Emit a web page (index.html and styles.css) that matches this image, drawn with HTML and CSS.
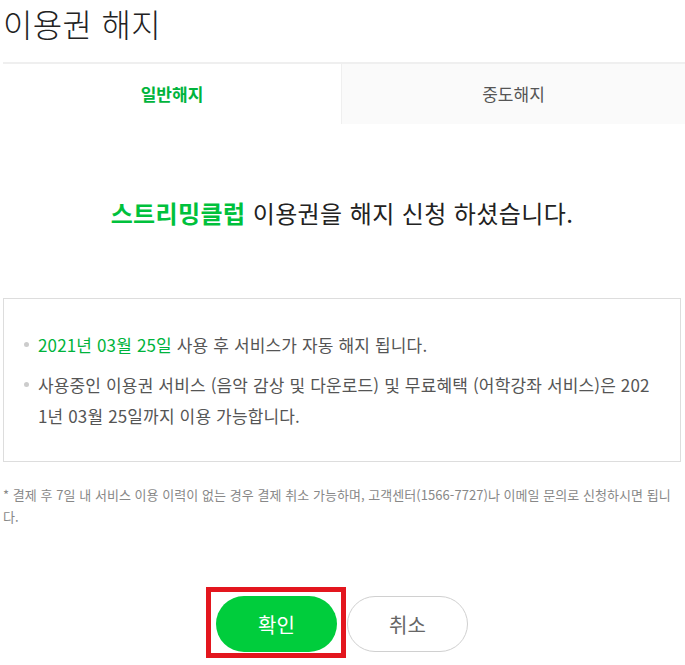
FILE: index.html
```html
<!DOCTYPE html>
<html lang="ko">
<head>
<meta charset="utf-8">
<title>이용권 해지</title>
<link rel="stylesheet" href="styles.css">
</head>
<body>
<div class="page">
  <h1 class="title">이용권 해지</h1>
  <div class="tabs">
    <div class="tab tab-on">일반해지</div>
    <div class="tab tab-off">중도해지</div>
  </div>
  <p class="message"><strong class="green">스트리밍클럽</strong> 이용권을 해지 신청 하셨습니다.</p>
  <div class="infobox">
    <ul class="list">
      <li><span><span class="date">2021년 03월 25일</span> 사용 후 서비스가 자동 해지 됩니다.</span></li>
      <li><span>사용중인 이용권 서비스 (음악 감상 및 다운로드) 및 무료혜택 (어학강좌 서비스)은 202<br>1년 03월 25일까지 이용 가능합니다.</span></li>
    </ul>
  </div>
  <p class="note">* 결제 후 7일 내 서비스 이용 이력이 없는 경우 결제 취소 가능하며, 고객센터(1566-7727)나 이메일 문의로 신청하시면 됩니<br>다.</p>
  <div class="buttons">
    <span class="highlight"><button class="btn btn-ok">확인</button></span>
    <button class="btn btn-cancel">취소</button>
  </div>
</div>
</body>
</html>
```

FILE: styles.css
```css
html, body {
  margin: 0;
  padding: 0;
  background: #fff;
}
body {
  font-family: "Noto Sans CJK KR", "Noto Sans", sans-serif;
  color: #222;
}
.page {
  width: 678px;
  padding: 0 4px 20px 3px;
}
.title {
  margin: 0;
  font-size: 32px;
  font-weight: 300;
  line-height: 46px;
  color: #222;
  letter-spacing: 0.3px;
}
.tabs {
  margin-top: 16px;
  margin-right: -4px;
  display: grid;
  grid-template-columns: 338px 1fr;
  border-top: 2px solid #efefef;
}
.tab {
  height: 60px;
  line-height: 60px;
  text-align: center;
  font-size: 17px;
}
.tab-on {
  color: #00b43c;
  font-weight: 700;
}
.tab-off {
  color: #555;
  background: #fafafa;
  border-left: 1px solid #efefef;
}
.message {
  margin: 0;
  padding: 74px 0 70px;
  text-align: center;
  font-size: 24px;
  line-height: 30px;
  color: #222;
  letter-spacing: 0.4px;
}
.green {
  color: #00c13c;
  font-weight: 700;
}
.infobox {
  border: 1px solid #dddddd;
  padding: 30px 0;
}
.list {
  list-style: none;
  margin: 0;
  padding: 0 0 0 20px;
}
.list li {
  display: flex;
  font-size: 17px;
  line-height: 31px;
  color: #555;
  letter-spacing: 0.15px;
}
.list li + li {
  margin-top: 9px;
}
.list li::before {
  content: "";
  flex: none;
  width: 5px;
  height: 5px;
  border-radius: 50%;
  background: #cccccc;
  margin: 13px 9px 0 0;
}
.date {
  color: #00b43c;
}
.note {
  margin: 22px 0 0;
  font-size: 13px;
  line-height: 22px;
  color: #888;
  letter-spacing: 0.05px;
  white-space: nowrap;
}
.buttons {
  margin-top: 68px;
  display: flex;
  justify-content: center;
  gap: 10px;
}
.highlight {
  position: relative;
  display: block;
}
.highlight::after {
  content: "";
  position: absolute;
  top: -9px;
  left: -10px;
  right: -9px;
  bottom: -6px;
  border: 5px solid #e3161e;
  pointer-events: none;
}
.btn {
  display: block;
  width: 121px;
  height: 56px;
  border-radius: 28px;
  font-family: "Noto Sans CJK KR", "Noto Sans", sans-serif;
  font-size: 20px;
  cursor: pointer;
  padding: 0;
}
.btn-ok {
  background: #00cd3c;
  color: #fff;
  border: none;
}
.btn-cancel {
  background: #fff;
  color: #666;
  border: 1px solid #d0d0d0;
}
```
